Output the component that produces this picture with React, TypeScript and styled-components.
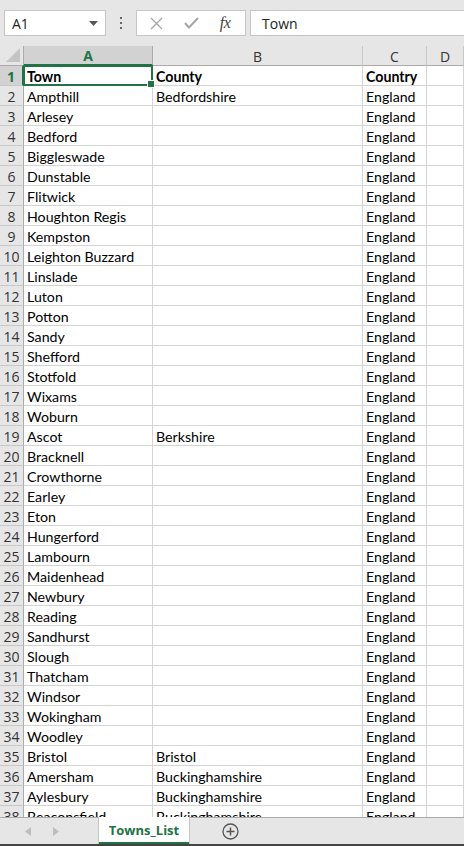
import React from "react";
import styled, { createGlobalStyle } from "styled-components";

const GlobalStyle = createGlobalStyle`
  html, body {
    margin: 0;
    padding: 0;
    background: #ffffff;
  }
  #root {
    height: 846px;
  }
`;

const Window = styled.div`
  width: 464px;
  height: 846px;
  display: flex;
  flex-direction: column;
  overflow: hidden;
  background: #ffffff;
  font-family: "Open Sans", "Noto Sans", sans-serif;
`;

const FormulaBar = styled.div`
  height: 46px;
  flex: none;
  background: #e6e6e6;
  display: flex;
  align-items: flex-start;
  padding-top: 10px;
  box-sizing: border-box;
`;

const NameBox = styled.div`
  margin-left: 4px;
  width: 102px;
  height: 26px;
  box-sizing: border-box;
  background: #ffffff;
  border: 1px solid #c6c6c6;
  display: flex;
  align-items: center;
  justify-content: space-between;
  padding: 0 7px 0 7px;
  font-size: 14px;
  color: #222;
`;

const Dots = styled.div`
  width: 30px;
  height: 26px;
  display: flex;
  align-items: center;
  justify-content: center;
`;

const ButtonGroup = styled.div`
  width: 110px;
  height: 26px;
  box-sizing: border-box;
  background: #ffffff;
  border: 1px solid #c6c6c6;
  display: flex;
  align-items: center;
  justify-content: space-around;
  padding: 0 4px 0 2px;
`;

const Fx = styled.span`
  font-family: "Liberation Serif", "DejaVu Serif", serif;
  font-style: italic;
  font-size: 16px;
  color: #444;
  letter-spacing: -0.5px;
`;

const FormulaInput = styled.div`
  margin-left: 4px;
  flex: 1;
  height: 26px;
  box-sizing: border-box;
  background: #ffffff;
  border: 1px solid #c6c6c6;
  border-right: none;
  display: flex;
  align-items: center;
  padding-left: 11px;
  font-size: 14px;
  color: #222;
`;

const Sheet = styled.div`
  flex: 1;
  overflow: hidden;
  display: grid;
  grid-template-columns: 24px 129px 210px 64px 1fr;
  grid-auto-rows: 20px;
  align-content: start;
`;

const Corner = styled.div`
  background: #e6e6e6;
  border-right: 1px solid #ababab;
  border-bottom: 1px solid #ababab;
  box-sizing: border-box;
  display: flex;
  align-items: flex-end;
  justify-content: flex-end;
  padding: 0 3px 3px 0;
`;

const ColHead = styled.div<{ $active?: boolean }>`
  background: ${(p) => (p.$active ? "#d2d2d2" : "#e6e6e6")};
  color: ${(p) => (p.$active ? "#217346" : "#333")};
  font-weight: ${(p) => (p.$active ? 700 : 400)};
  border-right: 1px solid ${(p) => (p.$active ? "#ababab" : "#c8c8c8")};
  border-bottom: ${(p) => (p.$active ? "2px solid #217346" : "1px solid #ababab")};
  box-sizing: border-box;
  display: flex;
  align-items: center;
  justify-content: center;
  font-size: 14px;
  padding-top: 1px;
`;

const RowHead = styled.div<{ $active?: boolean }>`
  background: ${(p) => (p.$active ? "#d2d2d2" : "#e6e6e6")};
  color: ${(p) => (p.$active ? "#217346" : "#333")};
  font-weight: ${(p) => (p.$active ? 700 : 400)};
  border-right: ${(p) => (p.$active ? "2px solid #217346" : "1px solid #ababab")};
  border-bottom: 1px solid #c8c8c8;
  box-sizing: border-box;
  display: flex;
  align-items: center;
  justify-content: center;
  font-size: 14px;
  padding-top: 1px;
`;

const Cell = styled.div<{ $bold?: boolean }>`
  position: relative;
  border-right: 1px solid #d4d4d4;
  border-bottom: 1px solid #d4d4d4;
  box-sizing: border-box;
  font-family: "Lato", "Open Sans", sans-serif;
  font-size: 14.2px;
  font-weight: ${(p) => (p.$bold ? 700 : 400)};
  color: #000;
  padding: 1px 0 0 3px;
  line-height: 19px;
  white-space: nowrap;
  overflow: hidden;
`;

const Selection = styled.div`
  position: absolute;
  left: -1px;
  top: -1px;
  right: -1px;
  bottom: -1px;
  border: 2px solid #217346;
  pointer-events: none;
`;

const Handle = styled.div`
  position: absolute;
  right: -4px;
  bottom: -4px;
  width: 6px;
  height: 6px;
  background: #217346;
  border: 1px solid #ffffff;
`;

const SelectedCell = styled(Cell)`
  overflow: visible;
  z-index: 2;
`;

const TabBar = styled.div`
  height: 29px;
  flex: none;
  background: #e6e6e6;
  border-top: 1px solid #ababab;
  border-bottom: 2px solid #444;
  box-sizing: border-box;
  display: flex;
  align-items: stretch;
`;

const NavArrows = styled.div`
  width: 99px;
  display: flex;
  align-items: center;
  padding-left: 25px;
  gap: 22px;
  box-sizing: border-box;
`;

const Tab = styled.div`
  width: 90px;
  background: #ffffff;
  border-bottom: 2px solid #217346;
  box-sizing: border-box;
  display: flex;
  align-items: center;
  justify-content: center;
  font-size: 13px;
  font-weight: 700;
  color: #217346;
  margin-top: -1px;
  box-shadow: 1px 0 0 #c6c6c6, -1px 0 0 #c6c6c6;
`;

const AddSheet = styled.div`
  margin-left: 33px;
  display: flex;
  align-items: center;
`;

type Row = [string, string, string];

const rows: Row[] = [
  ["Town", "County", "Country"],
  ["Ampthill", "Bedfordshire", "England"],
  ["Arlesey", "", "England"],
  ["Bedford", "", "England"],
  ["Biggleswade", "", "England"],
  ["Dunstable", "", "England"],
  ["Flitwick", "", "England"],
  ["Houghton Regis", "", "England"],
  ["Kempston", "", "England"],
  ["Leighton Buzzard", "", "England"],
  ["Linslade", "", "England"],
  ["Luton", "", "England"],
  ["Potton", "", "England"],
  ["Sandy", "", "England"],
  ["Shefford", "", "England"],
  ["Stotfold", "", "England"],
  ["Wixams", "", "England"],
  ["Woburn", "", "England"],
  ["Ascot", "Berkshire", "England"],
  ["Bracknell", "", "England"],
  ["Crowthorne", "", "England"],
  ["Earley", "", "England"],
  ["Eton", "", "England"],
  ["Hungerford", "", "England"],
  ["Lambourn", "", "England"],
  ["Maidenhead", "", "England"],
  ["Newbury", "", "England"],
  ["Reading", "", "England"],
  ["Sandhurst", "", "England"],
  ["Slough", "", "England"],
  ["Thatcham", "", "England"],
  ["Windsor", "", "England"],
  ["Wokingham", "", "England"],
  ["Woodley", "", "England"],
  ["Bristol", "Bristol", "England"],
  ["Amersham", "Buckinghamshire", "England"],
  ["Aylesbury", "Buckinghamshire", "England"],
  ["Beaconsfield", "Buckinghamshire", "England"],
];

const App = () => {
  return (
    <Window>
      <GlobalStyle />
      <FormulaBar>
        <NameBox>
          <span>A1</span>
          <svg width="9" height="5" viewBox="0 0 9 5">
            <path d="M0 0h9L4.5 5z" fill="#555" />
          </svg>
        </NameBox>
        <Dots>
          <svg width="3" height="13" viewBox="0 0 3 13">
            <rect x="0" y="0" width="2" height="2" fill="#666" />
            <rect x="0" y="5" width="2" height="2" fill="#666" />
            <rect x="0" y="10" width="2" height="2" fill="#666" />
          </svg>
        </Dots>
        <ButtonGroup>
          <svg width="13" height="13" viewBox="0 0 13 13">
            <path d="M1 1l11 11M12 1L1 12" stroke="#a6a6a6" strokeWidth="1.3" />
          </svg>
          <svg width="15" height="12" viewBox="0 0 15 12">
            <path d="M1 6l4 4.5L14 1" stroke="#a6a6a6" strokeWidth="2" fill="none" />
          </svg>
          <Fx>fx</Fx>
        </ButtonGroup>
        <FormulaInput>Town</FormulaInput>
      </FormulaBar>
      <Sheet>
        <Corner>
          <svg width="14" height="14" viewBox="0 0 14 14">
            <path d="M14 0v14H0z" fill="#c4c4c4" />
          </svg>
        </Corner>
        <ColHead $active>A</ColHead>
        <ColHead>B</ColHead>
        <ColHead>C</ColHead>
        <ColHead>D</ColHead>
        {rows.map((r, i) => (
          <React.Fragment key={i}>
            <RowHead $active={i === 0}>{i + 1}</RowHead>
            {i === 0 ? (
              <SelectedCell $bold>
                {r[0]}
                <Selection>
                  <Handle />
                </Selection>
              </SelectedCell>
            ) : (
              <Cell>{r[0]}</Cell>
            )}
            <Cell $bold={i === 0}>{r[1]}</Cell>
            <Cell $bold={i === 0}>{r[2]}</Cell>
            <Cell />
          </React.Fragment>
        ))}
      </Sheet>
      <TabBar>
        <NavArrows>
          <svg width="6" height="9" viewBox="0 0 6 9">
            <path d="M6 0v9L0 4.5z" fill="#bdbdbd" />
          </svg>
          <svg width="6" height="9" viewBox="0 0 6 9">
            <path d="M0 0v9l6-4.5z" fill="#bdbdbd" />
          </svg>
        </NavArrows>
        <Tab>Towns_List</Tab>
        <AddSheet>
          <svg width="17" height="17" viewBox="0 0 17 17">
            <circle cx="8.5" cy="8.5" r="7.5" stroke="#555" strokeWidth="1.3" fill="none" />
            <path d="M8.5 4.5v8M4.5 8.5h8" stroke="#555" strokeWidth="1.5" />
          </svg>
        </AddSheet>
      </TabBar>
    </Window>
  );
};

export default App;
